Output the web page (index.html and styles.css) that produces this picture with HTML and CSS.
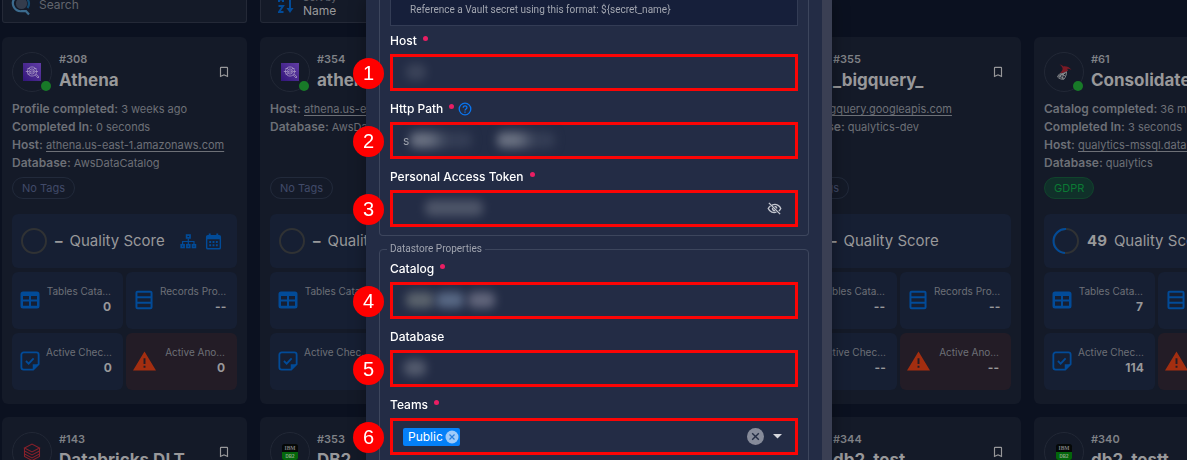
FILE: index.html
```html
<!DOCTYPE html>
<html lang="en">
<head>
<meta charset="utf-8">
<title>Datastores</title>
<link rel="stylesheet" href="styles.css">
</head>
<body>
<svg class="defs" aria-hidden="true">
  <symbol id="i-bookmark" viewBox="0 0 24 24"><path fill="currentColor" d="M17 18l-5-2.200L7 18V5h10m0-2H7a2 2 0 0 0-2 2v16l7-3 7 3V5a2 2 0 0 0-2-2z"/></symbol>
  <symbol id="i-athena" viewBox="0 0 18 18"><defs><linearGradient id="ath" x1="0" y1="1" x2="1" y2="0"><stop offset="0" stop-color="#32157a"/><stop offset="1" stop-color="#613da5"/></linearGradient></defs><rect width="18" height="18" fill="url(#ath)"/><g fill="none" stroke="#a797c4" stroke-width=".8"><circle cx="9" cy="8.500" r="4.600"/><circle cx="9" cy="8.500" r="2.600"/><path d="M2.800 8.500h3.400M12 8.500h3M4.500 5.500h2.500M11 5.500h2.500M4.500 11h2.500M9 7v3M7.500 8v1.500M10.500 7.500v2M12.300 12l2.700 3 1-1-2.800-3"/></g></symbol>
  <symbol id="i-databricks" viewBox="0 0 18 18"><g fill="none" stroke="#86202a" stroke-width="1.100"><path d="M1.500 5L9 1l7.500 4L9 9z"/><path d="M1.500 5v3L9 12l7.500-4V5M1.500 8v3L9 15l7.500-4V8M1.500 11v2.500L9 17.500l7.500-4V11"/></g></symbol>
  <symbol id="i-db2" viewBox="0 0 18 18"><rect x="1" y="1" width="16" height="16" rx="2.500" fill="#050807"/><path fill="#04660b" d="M1 9h16v5.500a2.500 2.500 0 0 1-2.500 2.500h-11A2.500 2.500 0 0 1 1 14.500z"/><text x="9" y="7.300" text-anchor="middle" font-size="5.500" font-weight="700" fill="#7d7f80" font-family="Liberation Serif, serif">IBM</text><text x="9" y="14.500" text-anchor="middle" font-size="4.500" font-weight="700" fill="#86a688" font-family="Liberation Sans, sans-serif">DB2</text></symbol>
  <symbol id="i-mssql" viewBox="0 0 18 18"><path fill="#7c1a25" d="M4.500 1.500c1.500 0 3 1 3.800 2 2.200-.5 6 .2 8.200 3.500-1.800-1.200-3.300-1.500-4.500-1 .8.500 1 1.200 1 1.800-2.500 1.700-5 2.200-8 2.400 1.500-1.500 2.800-3 2.600-4.700-.3-1.600-1.600-3-3.100-4z"/><path fill="none" stroke="#8b8d90" stroke-width=".9" d="M4.500 11c3-.2 5-1 7-2.200 0 3-.8 5-2.600 7.500C6.500 16.500 4 15.500 2.500 14c.5-1.200 1.200-2.200 2-3zM3.500 12.500l5.500 3M6.500 10.800c-1 1.400-1.700 2.600-1.700 4.500M9 10c-.7 2-1.400 3.600-1.800 6M5.500 11l5 2M10.500 10l-7 3.500"/></symbol>
  <symbol id="i-tree" viewBox="0 0 18 16"><g fill="none" stroke="currentColor" stroke-width="1.800"><rect x="7" y="1.200" width="3.600" height="3"/><rect x="1.300" y="11.500" width="3" height="2.800"/><rect x="7.300" y="11.500" width="3" height="2.800"/><rect x="13.300" y="11.500" width="3" height="2.800"/></g><path fill="none" stroke="currentColor" stroke-width="1.300" d="M8.800 5v6M2.800 11V8h12v3"/></symbol>
  <symbol id="i-calendar" viewBox="0 0 18 18"><path fill="currentColor" fill-rule="evenodd" d="M4 .5h2V2h6V.5h2V2h1a2 2 0 0 1 2 2v11.500a2 2 0 0 1-2 2H3a2 2 0 0 1-2-2V4a2 2 0 0 1 2-2h1zM2.500 6.500V15q0 1 1 1h11q1 0 1-1V6.500z"/><path fill="currentColor" d="M4.500 8.500h2v2h-2zm3.500 0h2v2H8zm3.500 0h2v2h-2zm-7 3.500h2v2h-2zM8 12h2v2H8zm3.500 0h2v2h-2z"/></symbol>
  <symbol id="i-table" viewBox="0 0 20 18"><path fill="currentColor" fill-rule="evenodd" d="M3 .5h14A2.500 2.500 0 0 1 19.500 3v12a2.500 2.500 0 0 1-2.500 2.500H3A2.500 2.500 0 0 1 .5 15V3A2.500 2.500 0 0 1 3 .5zM3 5v3.500h6V5zm8 0v3.500h6V5zm-8 5.500V14.800h6V10.500zm8 0v4.300h6v-4.300z"/></symbol>
  <symbol id="i-rows" viewBox="0 0 16 18"><g fill="none" stroke="currentColor" stroke-width="1.800"><rect x="1.200" y="1.500" width="13.600" height="15" rx="1"/><path d="M1 6.500h14M1 11.500h14"/></g></symbol>
  <symbol id="i-check" viewBox="0 0 22 22"><path fill="none" stroke="currentColor" stroke-width="2" d="M14.500 20.500H4A2.500 2.500 0 0 1 1.500 18V4A2.500 2.500 0 0 1 4 1.500h14A2.500 2.500 0 0 1 20.500 4v10.500z"/><path fill="currentColor" d="M14 21v-6.500h7z"/><path fill="none" stroke="currentColor" stroke-width="2" d="M6.500 11l3 3 5.500-6"/></symbol>
  <symbol id="i-warn" viewBox="0 0 24 20"><path fill="currentColor" fill-rule="evenodd" d="M12 0l12 20H0zM11 7v6h2V7zm0 8v2h2v-2z"/></symbol>
</svg>

<main class="page">
  <div class="grid toolbar">
    <label class="tool search">
      <svg class="logo" viewBox="0 0 20 20" aria-hidden="true"><circle cx="9.500" cy="7.500" r="5.600" fill="#343c4c"/><path fill="none" stroke="#134a70" stroke-width="2.200" d="M9.500 0a7.600 7.600 0 0 1 6 12"/><path fill="none" stroke="#3c6b8e" stroke-width="2.200" d="M3 2a7.900 7.900 0 0 0 6.500 13.200H14L17 18.500"/></svg>
      <input type="search" placeholder="Search" aria-label="Search">
    </label>
    <button class="tool sort" type="button">
      <svg class="az" viewBox="0 0 16 24" aria-hidden="true"><path fill="none" stroke="currentColor" stroke-width="2" d="M1 5.500V11M5 5.500V11M1 8.500h4M.5 15h4.500l-4 6h4.500M12 2v17"/><path fill="currentColor" d="M8.500 17h7L12 22z"/></svg>
      <span class="sort-text"><span class="sort-by">Sort by</span><span>Name</span></span>
    </button>
  </div>

  <div class="grid">
    <article class="card">
      <header class="head">
        <span class="avatar"><svg><use href="#i-athena"/></svg><i class="status"></i></span>
        <div class="title"><span class="id">#308</span><h2>Athena</h2></div>
        <button class="mark" type="button" aria-label="Bookmark"><svg><use href="#i-bookmark"/></svg></button>
      </header>
      <div class="details">
        <p><b>Profile completed:</b> 3 weeks ago</p>
        <p><b>Completed In:</b> 0 seconds</p>
        <p><b>Host:</b> <a href="#">athena.us-east-1.amazonaws.com</a></p>
        <p><b>Database:</b> AwsDataCatalog</p>
      </div>
      <span class="tag">No Tags</span>
      <div class="stats">
        <div class="score"><svg class="ring" viewBox="0 0 28 28"><circle cx="14" cy="14" r="12"/></svg><b>–</b><span>Quality Score</span><span class="tools"><svg><use href="#i-tree"/></svg><svg><use href="#i-calendar"/></svg></span></div>
        <div class="tile"><svg><use href="#i-table"/></svg><span>Tables Cata…</span><b>0</b></div>
        <div class="tile"><svg><use href="#i-rows"/></svg><span>Records Pro…</span><b>--</b></div>
        <div class="tile"><svg><use href="#i-check"/></svg><span>Active Chec…</span><b>0</b></div>
        <div class="tile alert"><svg><use href="#i-warn"/></svg><span>Active Ano…</span><b>0</b></div>
      </div>
    </article>

    <article class="card">
      <header class="head">
        <span class="avatar"><svg><use href="#i-athena"/></svg><i class="status"></i></span>
        <div class="title"><span class="id">#354</span><h2>athena</h2></div>
      </header>
      <div class="details">
        <p><b>Host:</b> <a href="#">athena.us-east</a></p>
        <p><b>Database:</b> AwsDataCatalog</p>
      </div>
      <span class="tag">No Tags</span>
      <div class="stats">
        <div class="score"><svg class="ring" viewBox="0 0 28 28"><circle cx="14" cy="14" r="12"/></svg><b>–</b><span>Quality Score</span></div>
        <div class="tile"><svg><use href="#i-table"/></svg><span>Tables Cata…</span></div>
        <div class="tile"></div>
        <div class="tile"><svg><use href="#i-check"/></svg><span>Active Chec…</span></div>
        <div class="tile alert"></div>
      </div>
    </article>

    <article class="card"></article>

    <article class="card">
      <header class="head">
        <span class="avatar"></span>
        <div class="title"><span class="id">#355</span><h2>_bigquery_</h2></div>
        <button class="mark" type="button" aria-label="Bookmark"><svg><use href="#i-bookmark"/></svg></button>
      </header>
      <div class="details">
        <p><b>Host:</b> <a href="#">bigquery.googleapis.com</a></p>
        <p><b>Database:</b> qualytics-dev</p>
      </div>
      <span class="tag">No Tags</span>
      <div class="stats">
        <div class="score"><svg class="ring" viewBox="0 0 28 28"><circle cx="14" cy="14" r="12"/></svg><b>–</b><span>Quality Score</span></div>
        <div class="tile"><svg><use href="#i-table"/></svg><span>Tables Cata…</span><b>--</b></div>
        <div class="tile"><svg><use href="#i-rows"/></svg><span>Records Pro…</span><b>--</b></div>
        <div class="tile"><svg><use href="#i-check"/></svg><span>Active Chec…</span><b>--</b></div>
        <div class="tile alert"><svg><use href="#i-warn"/></svg><span>Active Ano…</span><b>--</b></div>
      </div>
    </article>

    <article class="card">
      <header class="head">
        <span class="avatar"><svg><use href="#i-mssql"/></svg><i class="status"></i></span>
        <div class="title"><span class="id">#61</span><h2>Consolidated</h2></div>
      </header>
      <div class="details">
        <p><b>Catalog completed:</b> 36 minutes ago</p>
        <p><b>Completed In:</b> 3 seconds</p>
        <p><b>Host:</b> <a href="#">qualytics-mssql.database</a></p>
        <p><b>Database:</b> qualytics</p>
      </div>
      <span class="tag tag-green">GDPR</span>
      <div class="stats">
        <div class="score"><svg class="ring" viewBox="0 0 28 28"><circle cx="14" cy="14" r="12"/><path d="M14 2a12 12 0 0 0-1 24"/></svg><b>49</b><span>Quality Score</span></div>
        <div class="tile"><svg><use href="#i-table"/></svg><span>Tables Cata…</span><b>7</b></div>
        <div class="tile"><svg><use href="#i-rows"/></svg></div>
        <div class="tile"><svg><use href="#i-check"/></svg><span>Active Chec…</span><b>114</b></div>
        <div class="tile alert"><svg><use href="#i-warn"/></svg></div>
      </div>
    </article>

    <article class="card">
      <header class="head">
        <span class="avatar"><svg><use href="#i-databricks"/></svg></span>
        <div class="title"><span class="id">#143</span><h2>Databricks DLT</h2></div>
        <button class="mark" type="button" aria-label="Bookmark"><svg><use href="#i-bookmark"/></svg></button>
      </header>
    </article>
    <article class="card">
      <header class="head">
        <span class="avatar"><svg><use href="#i-db2"/></svg></span>
        <div class="title"><span class="id">#353</span><h2>DB2</h2></div>
      </header>
    </article>
    <article class="card"></article>
    <article class="card">
      <header class="head">
        <span class="avatar"></span>
        <div class="title"><span class="id">#344</span><h2>db2_test</h2></div>
        <button class="mark" type="button" aria-label="Bookmark"><svg><use href="#i-bookmark"/></svg></button>
      </header>
    </article>
    <article class="card">
      <header class="head">
        <span class="avatar"><svg><use href="#i-db2"/></svg></span>
        <div class="title"><span class="id">#340</span><h2>db2_testt</h2></div>
      </header>
    </article>
  </div>
</main>

<div class="overlay">
  <form class="modal">
    <section class="group group-first">
      <p class="info">Reference a Vault secret using this format: ${secret_name}</p>
      <div class="field">
        <label for="host">Host<i class="req"></i></label>
        <div class="box"><span class="step">1</span><input id="host" type="text"><i class="smudge s-host"></i></div>
      </div>
      <div class="field">
        <label for="path">Http Path<i class="req"></i><svg class="help" viewBox="0 0 14 14" aria-hidden="true"><g fill="none" stroke="currentColor" stroke-width="1.300"><circle cx="7" cy="7" r="5.800"/><path d="M5.200 5.700c0-2.600 3.800-2.400 3.700 0C8.900 7 7 7 7 8.500M7 9.500v1.300"/></g></svg></label>
        <div class="box"><span class="step">2</span><input id="path" type="text" value="s"><i class="smudge s-path-a"></i><i class="smudge s-path-b"></i></div>
      </div>
      <div class="field">
        <label for="token">Personal Access Token<i class="req"></i></label>
        <div class="box"><span class="step">3</span><input id="token" type="password"><i class="smudge s-token"></i>
          <button class="icon-btn eye" type="button" aria-label="Show token"><svg viewBox="0 0 24 24"><g fill="none" stroke="currentColor" stroke-width="2.200"><path d="M8 6.500C15 3.500 20.500 7.500 22 12c-.6 1.500-1.600 3-3 4M5.500 8C4 9 2.700 10.500 2 12c2.500 6 8.500 7.500 13 5.800M3 3l18 18"/><path d="M12 8.500a3.500 3.500 0 0 1 3.500 3.500M8.800 11a3.500 3.500 0 0 0 4.200 4.200"/></g></svg></button></div>
      </div>
    </section>

    <fieldset class="group">
      <legend>Datastore Properties</legend>
      <div class="field">
        <label for="catalog">Catalog<i class="req"></i></label>
        <div class="box"><span class="step">4</span><input id="catalog" type="text"><i class="smudge s-cat-a"></i><i class="smudge s-cat-b"></i><i class="smudge s-cat-c"></i></div>
      </div>
      <div class="field">
        <label for="database">Database</label>
        <div class="box"><span class="step">5</span><input id="database" type="text"><i class="smudge s-db"></i></div>
      </div>
      <div class="field">
        <label for="teams">Teams<i class="req"></i></label>
        <div class="box"><span class="step">6</span>
          <span class="chip">Public<button type="button" aria-label="Remove Public"><svg viewBox="0 0 14 14"><circle cx="7" cy="7" r="6.500" fill="#9fcbfa"/><path d="M4.500 4.500l5 5m0-5l-5 5" stroke="#2a7fdc" stroke-width="1.200"/></svg></button></span>
          <input id="teams" type="text">
          <button class="icon-btn clear" type="button" aria-label="Clear teams"><svg viewBox="0 0 18 18"><circle cx="9" cy="9" r="9" fill="#868b9a"/><path d="M5.500 5.500l7 7m0-7l-7 7" stroke="#252d45" stroke-width="1.500"/></svg></button>
          <button class="icon-btn drop" type="button" aria-label="Open teams"><svg viewBox="0 0 10 5"><path fill="#d5d7dd" d="M0 0h10L5 5z"/></svg></button>
        </div>
      </div>
    </fieldset>
  </form>
</div>
</body>
</html>
```
FILE: styles.css
```css
* {
  box-sizing: border-box;
}

body {
  margin: 0;
  height: 100vh;
  overflow: hidden;
  background: #0b1120;
  color: #6d7077;
  font: 12px/18px Inter, "Noto Sans", sans-serif;
}

p, h2 {
  margin: 0;
}

button, input {
  font: inherit;
  color: inherit;
  background: none;
  border: 0;
  padding: 0;
}

svg {
  display: block;
}

.defs {
  position: absolute;
  width: 0;
  height: 0;
}

.page {
  display: flex;
  flex-direction: column;
  gap: 14px;
  height: 100vh;
  padding-left: 2px;
  overflow: hidden;
}

.grid {
  display: grid;
  grid-template-columns: repeat(5, minmax(245px, 1fr));
  gap: 13px;
}

.tool {
  display: flex;
  height: 23px;
  background: #141a28;
  border: 1px solid #242937;
  border-top: 0;
  border-radius: 0 0 3px 3px;
}

.search {
  align-items: flex-start;
  gap: 7px;
  padding-left: 9px;
}

.logo {
  flex: none;
  width: 20px;
  height: 20px;
  margin-top: -4px;
  overflow: visible;
}

.search input {
  flex: 1;
  min-width: 0;
  height: 10px;
}

.search input::placeholder {
  color: #62656d;
}

.sort {
  align-items: flex-end;
  gap: 9px;
  padding: 0 0 1px 17px;
  color: #99999b;
  text-align: left;
  overflow: hidden;
}

.az {
  flex: none;
  width: 16px;
  height: 24px;
  margin-bottom: 6px;
  color: #024b98;
}

.sort-text {
  display: flex;
  flex-direction: column;
  padding-bottom: 2px;
}

.sort-text span {
  line-height: 16px;
}

.sort-text .sort-by {
  color: #62656d;
  font-size: 10px;
  line-height: 12px;
}

.card {
  height: 367px;
  padding: 15px 10px 14px;
  background: #141a28;
  border-radius: 6px;
  overflow: hidden;
}

.head {
  display: flex;
  gap: 7px;
  height: 40px;
}

.avatar {
  position: relative;
  display: grid;
  place-items: center;
  flex: none;
  width: 40px;
  height: 40px;
  border: 1px solid #222836;
  border-radius: 50%;
}

.avatar svg {
  width: 18px;
  height: 18px;
}

.status {
  position: absolute;
  right: 0;
  bottom: 0;
  width: 10px;
  height: 10px;
  border-radius: 50%;
  background: #187a28;
}

.title {
  flex: 1;
  min-width: 0;
  white-space: nowrap;
}

.id {
  display: block;
  font-size: 11px;
  font-weight: 600;
  line-height: 14px;
  color: #7f8186;
}

h2 {
  font-size: 17px;
  font-weight: 700;
  line-height: 28px;
  color: #98989a;
}

.mark {
  align-self: center;
  width: 14px;
  height: 14px;
  margin-right: 6px;
  color: #98989a;
}

.mark svg {
  width: 14px;
  height: 14px;
}

.details {
  height: 72px;
  margin: 8px 0 5px;
  font-size: 11px;
  white-space: nowrap;
}

.details b {
  font-size: 12px;
  font-weight: 600;
}

.details a {
  color: inherit;
  text-underline-offset: 2px;
}

.tag {
  display: inline-block;
  height: 22px;
  padding: 0 9px;
  border: 1px solid #222a3b;
  border-radius: 11px;
  color: #414a69;
  font-size: 11px;
  line-height: 20px;
  vertical-align: top;
}

.tag-green {
  color: #0b7a34;
  background: #10302a;
  border-color: #10442c;
}

.stats {
  display: grid;
  grid-template-columns: repeat(2, minmax(0, 1fr));
  grid-template-rows: 54px 57px 57px;
  gap: 4px 3px;
  margin-top: 15px;
}

.score {
  grid-column: 1 / -1;
  display: flex;
  align-items: center;
  gap: 7px;
  padding: 0 15px 0 8px;
  border-radius: 6px;
  background: #161f33;
  color: #98989a;
  font-size: 15px;
  white-space: nowrap;
}

.ring {
  flex: none;
  width: 28px;
  height: 28px;
  fill: none;
  stroke-width: 2;
}

.ring circle {
  stroke: #303234;
}

.ring path {
  stroke: #024b98;
}

.tools {
  display: flex;
  gap: 8px;
  margin-left: auto;
  color: #024b98;
}

.tools svg {
  width: 17px;
  height: 17px;
}

.tile {
  display: grid;
  grid-template-columns: 22px 1fr;
  grid-template-rows: 14px 18px;
  align-content: center;
  column-gap: 5px;
  padding: 0 12px 2px 7px;
  border-radius: 6px;
  background: #161f33;
  font-size: 10px;
  line-height: 14px;
  white-space: nowrap;
}

.tile svg {
  grid-row: 1 / 3;
  place-self: center;
  width: 20px;
  height: 20px;
  color: #024b98;
}

.tile span {
  justify-self: end;
}

.tile b {
  grid-column: 2;
  justify-self: end;
  color: #98989a;
  font-size: 12px;
  line-height: 18px;
}

.alert {
  background: #231c26;
}

.alert svg {
  width: 23px;
  color: #a32e10;
}

.overlay {
  position: fixed;
  inset: 0;
  display: flex;
  justify-content: center;
  align-items: flex-start;
  padding-left: 11px;
  overflow: hidden;
}

.modal {
  width: 466px;
  min-height: 100%;
  padding: 0 13px;
  background: #232c45;
  border-right: 10px solid #3a3f53;
  box-shadow: 0 0 16px rgba(0, 0, 0, .35);
  color: #fff;
}

.group {
  margin: 0 0 7px;
  padding: 0 10px 8px;
  border: 1px solid #3d465d;
  border-radius: 4px;
}

.group-first {
  border-top: 0;
  border-radius: 0 0 4px 4px;
}

fieldset.group {
  padding-top: 5px;
}

.field + .field {
  margin-top: 9px;
}

legend {
  margin-left: -3px;
  padding: 0 3px;
  color: #a0a4af;
  font-family: Roboto, sans-serif;
  font-size: 10px;
  line-height: 12px;
}

.info {
  margin-bottom: 6px;
  padding: 2px 19px 7px;
  background: #161f3a;
  border: 1px solid #333c55;
  border-top: 0;
  color: #a3a7b1;
  font-family: Roboto, sans-serif;
  font-size: 10px;
  line-height: 16px;
}

.field label {
  display: flex;
  align-items: center;
  height: 18px;
  margin-bottom: 4px;
  font-weight: 500;
}

.req {
  width: 5px;
  height: 5px;
  margin: 0 0 5px 6px;
  border-radius: 50%;
  background: #e91e63;
}

.help {
  width: 14px;
  height: 14px;
  margin-left: 4px;
  color: #0a75f0;
}

.box {
  position: relative;
  display: flex;
  align-items: center;
  height: 37px;
  padding: 0 13px 0 10px;
  border: 3px solid #fb0505;
}

.box input {
  flex: 1;
  min-width: 0;
  height: 100%;
  outline: 0;
  color: #a3a7b1;
}

.step {
  position: absolute;
  top: 50%;
  left: -40px;
  width: 31px;
  height: 31px;
  margin-top: -15px;
  border-radius: 50%;
  background: #f00;
  font-size: 20px;
  font-family: "Liberation Sans", sans-serif;
  line-height: 31px;
  text-align: center;
}

.smudge {
  position: absolute;
  top: 7px;
  height: 16px;
  border-radius: 6px;
  background: #606778;
  filter: blur(5px);
}

.s-host { left: 13px; width: 20px; opacity: .4; }
.s-path-a { left: 17px; width: 62px; background: linear-gradient(90deg, #697081 30%, #343d55 60%); }
.s-path-b { left: 104px; width: 58px; background: linear-gradient(90deg, #697081 35%, #343d55 65%); }
.s-token { left: 32px; width: 58px; opacity: .7; }
.s-cat-a { left: 13px; width: 28px; background: #697177; opacity: .8; }
.s-cat-b { left: 43px; width: 28px; background: #667895; opacity: .8; }
.s-cat-c { left: 75px; width: 27px; background: #717489; opacity: .8; }
.s-db { left: 11px; width: 22px; opacity: .8; }

.icon-btn svg {
  width: 100%;
}

.eye {
  width: 15px;
  color: #c3c6ce;
}

.clear {
  width: 17px;
}

.drop {
  width: 9px;
  margin-left: 9px;
}

.chip {
  display: flex;
  align-items: center;
  gap: 2px;
  height: 18px;
  padding: 0 1px 0 5px;
  border-radius: 2px;
  background: #0480f8;
}

.chip svg {
  width: 14px;
  height: 14px;
}
```
